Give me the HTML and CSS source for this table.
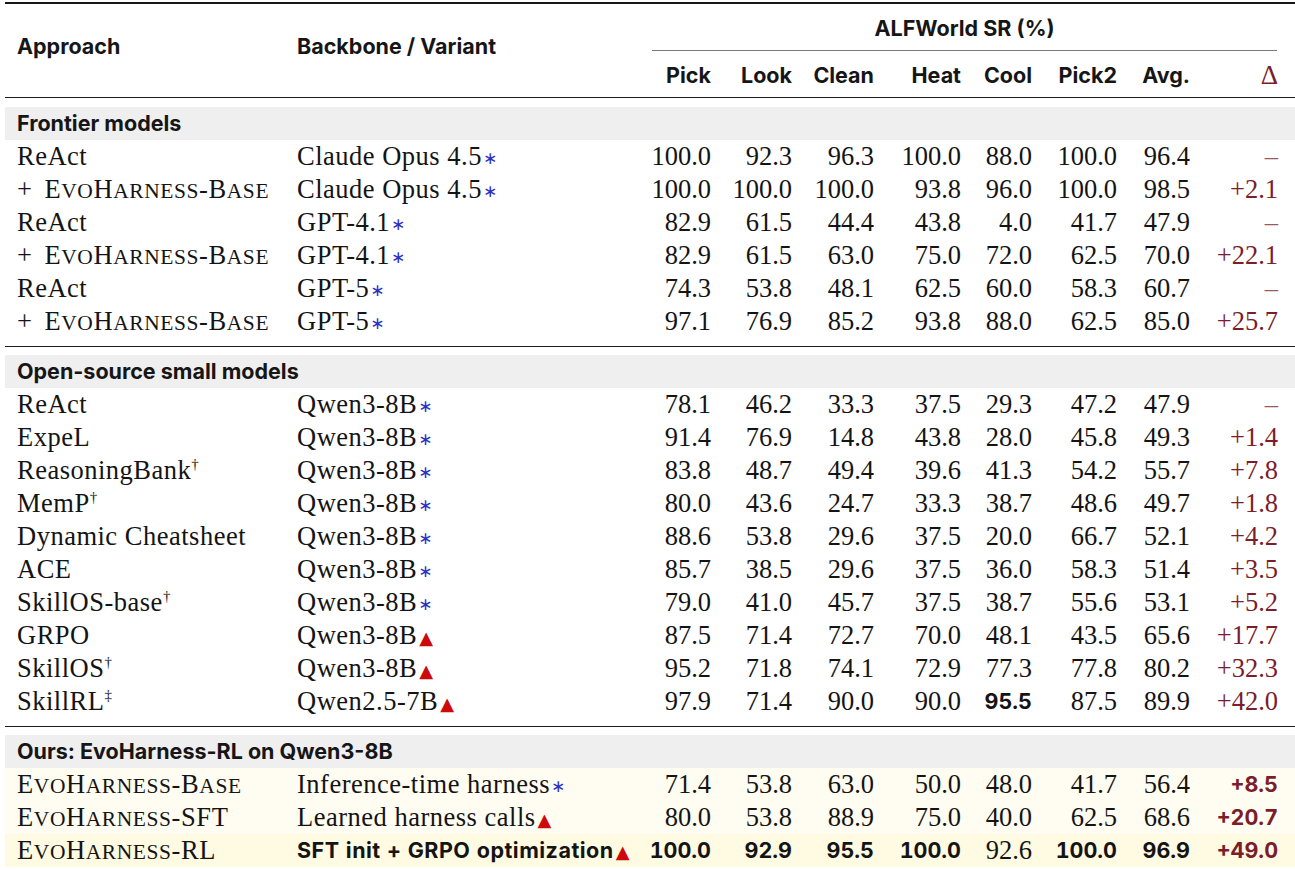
FILE: index.html
```html
<!DOCTYPE html>
<html lang="en">
<head>
<meta charset="utf-8">
<title>ALFWorld results</title>
<link rel="stylesheet" href="styles.css">
</head>
<body>
<table class="results">
  <colgroup>
    <col class="c-app"><col class="c-bb"><col class="c-pick"><col class="c-look"><col class="c-clean"><col class="c-heat"><col class="c-cool"><col class="c-pick2"><col class="c-avg"><col class="c-delta">
  </colgroup>
  <thead>
    <tr class="h1">
      <th rowspan="2" class="lab app">Approach</th>
      <th rowspan="2" class="lab">Backbone / Variant</th>
      <th colspan="8" class="span"><div class="cmid">ALFWorld SR (%)</div></th>
    </tr>
    <tr class="h2">
      <th class="num">Pick</th><th class="num">Look</th><th class="num">Clean</th><th class="num">Heat</th><th class="num">Cool</th><th class="num">Pick2</th><th class="num">Avg.</th><th class="num dl"><span class="dsym">Δ</span></th>
    </tr>
  </thead>
  <tbody class="sec first">
    <tr class="grp"><td colspan="10">Frontier models</td></tr>
    <tr><td class="app">ReAct</td><td>Claude Opus 4.5<span class="ast">∗</span></td><td>100.0</td><td>92.3</td><td>96.3</td><td>100.0</td><td>88.0</td><td>100.0</td><td>96.4</td><td class="dl dash">–</td></tr>
    <tr><td class="app"><span class="plus">+</span><span class="sc">E<span class="s">vo</span>H<span class="s">arness</span>-B<span class="s">ase</span></span></td><td>Claude Opus 4.5<span class="ast">∗</span></td><td>100.0</td><td>100.0</td><td>100.0</td><td>93.8</td><td>96.0</td><td>100.0</td><td>98.5</td><td class="dl">+2.1</td></tr>
    <tr><td class="app">ReAct</td><td>GPT-4.1<span class="ast">∗</span></td><td>82.9</td><td>61.5</td><td>44.4</td><td>43.8</td><td>4.0</td><td>41.7</td><td>47.9</td><td class="dl dash">–</td></tr>
    <tr><td class="app"><span class="plus">+</span><span class="sc">E<span class="s">vo</span>H<span class="s">arness</span>-B<span class="s">ase</span></span></td><td>GPT-4.1<span class="ast">∗</span></td><td>82.9</td><td>61.5</td><td>63.0</td><td>75.0</td><td>72.0</td><td>62.5</td><td>70.0</td><td class="dl">+22.1</td></tr>
    <tr><td class="app">ReAct</td><td>GPT-5<span class="ast">∗</span></td><td>74.3</td><td>53.8</td><td>48.1</td><td>62.5</td><td>60.0</td><td>58.3</td><td>60.7</td><td class="dl dash">–</td></tr>
    <tr><td class="app"><span class="plus">+</span><span class="sc">E<span class="s">vo</span>H<span class="s">arness</span>-B<span class="s">ase</span></span></td><td>GPT-5<span class="ast">∗</span></td><td>97.1</td><td>76.9</td><td>85.2</td><td>93.8</td><td>88.0</td><td>62.5</td><td>85.0</td><td class="dl">+25.7</td></tr>
  </tbody>
  <tbody class="sec">
    <tr class="grp"><td colspan="10">Open-source small models</td></tr>
    <tr><td class="app">ReAct</td><td>Qwen3-8B<span class="ast">∗</span></td><td>78.1</td><td>46.2</td><td>33.3</td><td>37.5</td><td>29.3</td><td>47.2</td><td>47.9</td><td class="dl dash">–</td></tr>
    <tr><td class="app">ExpeL</td><td>Qwen3-8B<span class="ast">∗</span></td><td>91.4</td><td>76.9</td><td>14.8</td><td>43.8</td><td>28.0</td><td>45.8</td><td>49.3</td><td class="dl">+1.4</td></tr>
    <tr><td class="app">ReasoningBank<sup>†</sup></td><td>Qwen3-8B<span class="ast">∗</span></td><td>83.8</td><td>48.7</td><td>49.4</td><td>39.6</td><td>41.3</td><td>54.2</td><td>55.7</td><td class="dl">+7.8</td></tr>
    <tr><td class="app">MemP<sup>†</sup></td><td>Qwen3-8B<span class="ast">∗</span></td><td>80.0</td><td>43.6</td><td>24.7</td><td>33.3</td><td>38.7</td><td>48.6</td><td>49.7</td><td class="dl">+1.8</td></tr>
    <tr><td class="app">Dynamic Cheatsheet</td><td>Qwen3-8B<span class="ast">∗</span></td><td>88.6</td><td>53.8</td><td>29.6</td><td>37.5</td><td>20.0</td><td>66.7</td><td>52.1</td><td class="dl">+4.2</td></tr>
    <tr><td class="app">ACE</td><td>Qwen3-8B<span class="ast">∗</span></td><td>85.7</td><td>38.5</td><td>29.6</td><td>37.5</td><td>36.0</td><td>58.3</td><td>51.4</td><td class="dl">+3.5</td></tr>
    <tr><td class="app">SkillOS-base<sup>†</sup></td><td>Qwen3-8B<span class="ast">∗</span></td><td>79.0</td><td>41.0</td><td>45.7</td><td>37.5</td><td>38.7</td><td>55.6</td><td>53.1</td><td class="dl">+5.2</td></tr>
    <tr><td class="app">GRPO</td><td>Qwen3-8B<span class="tri">▲</span></td><td>87.5</td><td>71.4</td><td>72.7</td><td>70.0</td><td>48.1</td><td>43.5</td><td>65.6</td><td class="dl">+17.7</td></tr>
    <tr><td class="app">SkillOS<sup>†</sup></td><td>Qwen3-8B<span class="tri">▲</span></td><td>95.2</td><td>71.8</td><td>74.1</td><td>72.9</td><td>77.3</td><td>77.8</td><td>80.2</td><td class="dl">+32.3</td></tr>
    <tr><td class="app">SkillRL<sup>‡</sup></td><td>Qwen2.5-7B<span class="tri">▲</span></td><td>97.9</td><td>71.4</td><td>90.0</td><td>90.0</td><td class="b">95.5</td><td>87.5</td><td>89.9</td><td class="dl">+42.0</td></tr>
  </tbody>
  <tbody class="sec ours">
    <tr class="grp"><td colspan="10">Ours: EvoHarness-RL on Qwen3-8B</td></tr>
    <tr class="o"><td class="app"><span class="sc">E<span class="s">vo</span>H<span class="s">arness</span>-B<span class="s">ase</span></span></td><td>Inference-time harness<span class="ast">∗</span></td><td>71.4</td><td>53.8</td><td>63.0</td><td>50.0</td><td>48.0</td><td>41.7</td><td>56.4</td><td class="dl b">+8.5</td></tr>
    <tr class="o"><td class="app"><span class="sc">E<span class="s">vo</span>H<span class="s">arness</span>-SFT</span></td><td>Learned harness calls<span class="tri">▲</span></td><td>80.0</td><td>53.8</td><td>88.9</td><td>75.0</td><td>40.0</td><td>62.5</td><td>68.6</td><td class="dl b">+20.7</td></tr>
    <tr class="o best"><td class="app"><span class="sc">E<span class="s">vo</span>H<span class="s">arness</span>-RL</span></td><td class="b">SFT init + GRPO optimization<span class="tri">▲</span></td><td class="b">100.0</td><td class="b">92.9</td><td class="b">95.5</td><td class="b">100.0</td><td>92.6</td><td class="b">100.0</td><td class="b">96.9</td><td class="dl b">+49.0</td></tr>
  </tbody>
</table>
</body>
</html>
```

FILE: styles.css
```css
html, body {
  margin: 0;
  padding: 0;
  background: #ffffff;
}

.results {
  margin: 2px 0 0 5px;
  width: 1290px;
  table-layout: fixed;
  border-collapse: separate;
  border-spacing: 0;
  border-top: 2px solid #161616;
  color: #141414;
  font-family: "Liberation Serif", "Times New Roman", serif;
  font-size: 26.5px;
}

.c-app { width: 292px; }
.c-bb { width: 343px; }
.c-pick { width: 71px; }
.c-look { width: 81px; }
.c-clean { width: 82px; }
.c-heat { width: 87px; }
.c-cool { width: 71px; }
.c-pick2 { width: 85px; }
.c-avg { width: 73px; }
.c-delta { width: 105px; }

th {
  font-family: Inter, "Noto Sans", sans-serif;
  font-weight: 700;
  font-size: 21.5px;
  color: #161616;
  padding: 0;
}

.lab {
  text-align: left;
  vertical-align: middle;
  padding-bottom: 10px;
  border-bottom: 1px solid #1c1c1c;
}

.lab.app { padding-left: 12px; }

.span { padding: 0; }

.cmid {
  margin: 0 18px 0 12px;
  padding-top: 9px;
  height: 47px;
  line-height: 30px;
  text-align: center;
  border-bottom: 1px solid #7a7a7a;
  box-sizing: border-box;
}

.h2 th {
  height: 44px;
  border-bottom: 1px solid #1c1c1c;
  vertical-align: middle;
  padding-top: 2px;
}

.num { text-align: right; }

.dsym {
  font-family: "Liberation Serif", "Times New Roman", serif;
  font-weight: 400;
  font-size: 27px;
  color: #7b1d2b;
}

td {
  height: 33px;
  padding: 0;
  line-height: 33px;
  white-space: nowrap;
  text-align: right;
  vertical-align: middle;
}

td.app {
  text-align: left;
  padding-left: 12px;
  letter-spacing: 0.5px;
}

td:nth-child(2) {
  text-align: left;
  letter-spacing: 0.5px;
}

.dl {
  padding-right: 17px;
  color: #7b1d2b;
}

.dash { color: #9a5a63; }

.grp td {
  text-align: left;
  padding-left: 12px;
  background: #efefef;
  background-clip: padding-box;
  border-top: 8px solid transparent;
  font-family: Inter, "Noto Sans", sans-serif;
  font-weight: 700;
  font-size: 21.5px;
  letter-spacing: 0;
  color: #161616;
}

.sec.first .grp td { border-top-width: 9px; }

.sec:not(.ours) tr:last-child td {
  padding-bottom: 8px;
  border-bottom: 1px solid #1c1c1c;
}

.plus { margin-right: 12px; }

.sc { letter-spacing: 0.6px; }

.s {
  font-size: 0.81em;
  text-transform: uppercase;
  line-height: 1;
}

sup {
  font-size: 15px;
  line-height: 1;
  vertical-align: 10px;
}

.ast {
  font-family: "DejaVu Sans", sans-serif;
  font-size: 17px;
  line-height: 1;
  color: #2f2fbf;
  margin-left: 1px;
  vertical-align: 1px;
}

.tri {
  font-family: "DejaVu Sans", sans-serif;
  font-size: 18px;
  line-height: 1;
  color: #cc0a0a;
  margin-left: 2px;
}

.b {
  font-family: Inter, "Noto Sans", sans-serif;
  font-weight: 700;
  font-size: 21.5px;
  letter-spacing: 0;
  font-feature-settings: "tnum" 1;
}

.o td { background: #fffdf2; }
.o.best td { background: #fffae2; }
```
